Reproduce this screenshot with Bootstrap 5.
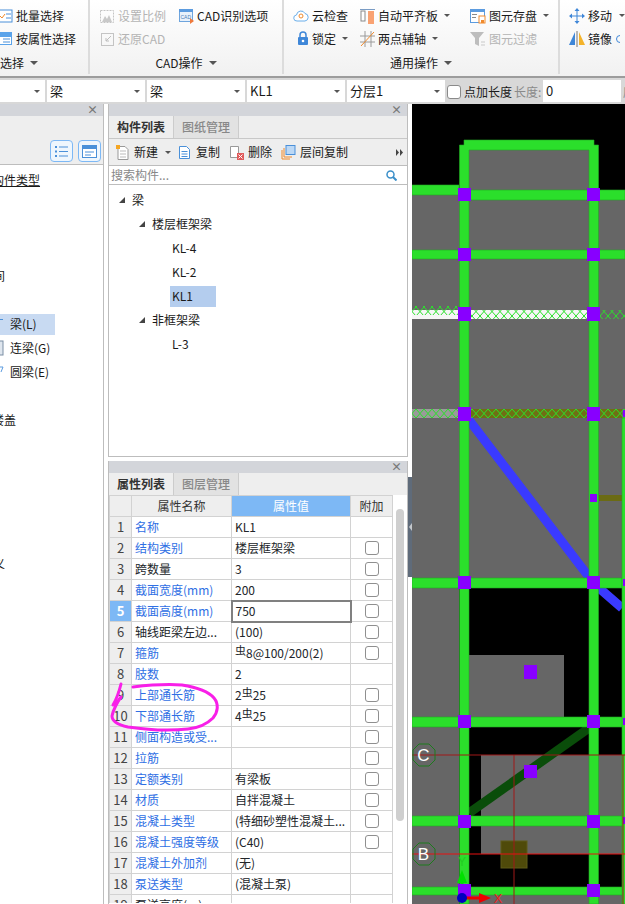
<!DOCTYPE html>
<html lang="zh-CN">
<head>
    <meta charset="UTF-8">
    <meta name="viewport" content="width=device-width, initial-scale=1.0">
    <title>构件列表</title>
    <link href="https://cdn.jsdelivr.net/npm/bootstrap@5.3.0/dist/css/bootstrap.min.css" rel="stylesheet">
    <style>
        html, body { height: 904px; overflow: hidden; }
        body {
            background: #fff;
            color: #1a1a1a;
            font-family: "Noto Sans CJK SC", "Liberation Sans", sans-serif;
            font-size: 12px;
            line-height: 16px;
        }
        .rb-bar { height: 76px; background: linear-gradient(to bottom, #fff, #f1f1f1); flex: none; overflow: hidden; }
        .rb-group { flex: none; height: 74px; border-right: 2px solid #dcdcdc; }
        .rb-last { border-right: 0; }
        .rb-body { height: 52px; padding-top: 4px; }
        .rb-row { height: 23px; gap: 3px; white-space: nowrap; }
        .rb-label { height: 22px; gap: 6px; }
        .rb-off { color: #b4b4b4; }
        .caret-dn { width: 0; height: 0; border-left: 4px solid transparent; border-right: 4px solid transparent; border-top: 4px solid #555; flex: none; }
        .caret-sm { border-left-width: 3px; border-right-width: 3px; border-top-width: 3px; margin-left: 3px; }
        .w-g1 { width: 90px; }
        .w-g2 { width: 194px; }
        .w-g3 { width: 276px; }
        .w-g4 { width: 65px; }
        .pl-col { padding-left: 9px; }
        .w-80 { width: 80px; }
        .w-67 { width: 67px; }
        .w-110 { width: 110px; }
        .w-53 { width: 53px; }
        .opt-bar { height: 28px; flex: none; background: #d8d8d8; border-top: 2px solid #9c9c9c; padding-top: 2px; gap: 2px; overflow: hidden; white-space: nowrap; }
        .opt-sel { height: 22px; width: 98px; flex: none; background: #fff; padding: 0 5px 0 3px; font-size: 13px; }
        .opt-first { width: 45px; }
        .opt-check { width: 14px; height: 14px; margin: 0 3px 0 0; border: 1px solid #8a8a8a; border-radius: 3px; flex: none; }
        .opt-name { margin-right: 2px; }
        .opt-len { margin-right: 0; width: 27px; overflow: hidden; }
        .opt-input { width: 78px; height: 22px; background: #fff; padding-left: 3px; flex: none; font-size: 13px; }
        .opt-mute { color: #8a8a8a; }
        .work-area { height: 800px; }
        .side-pane { width: 104px; flex: none; border-right: 1px solid #bdbdbd; overflow: hidden; }
        .mid-col { width: 300px; flex: none; margin-left: 4px; }
        .pane-head { height: 12px; flex: none; background: #d3d5da; color: #777; font-size: 11px; line-height: 11px; font-weight: 700; text-align: right; padding-right: 5px; }
        .tab-strip { height: 22px; flex: none; background: #eee; }
        .tab-on, .tab-off { width: 65px; text-align: center; line-height: 21px; font-size: 12px; }
        .tab-on { font-weight: 700; color: #333; border-right: 1px solid #ccc; }
        .tab-off { color: #888; background: #e2e2e2; border-right: 1px solid #ccc; font-weight: 500; }
        .pane-box { border-left: 1px solid #bdbdbd; border-right: 1px solid #bdbdbd; }
        .tool-strip { height: 28px; flex: none; background: #eee; border-top: 1px solid #c8c8c8; border-bottom: 1px solid #bdbdbd; gap: 9px; padding-left: 6px; white-space: nowrap; }
        .tool-item { gap: 4px; }
        .tool-copy { gap: 5px; margin-left: -2px; }
        .search-row { height: 19px; flex: none; border-bottom: 1px solid #bdbdbd; color: #888; padding: 0 10px 0 2px; }
        .tree-area { height: 272px; border-bottom: 1px solid #bdbdbd; padding-top: 3px; }
        .tree-row { height: 24px; white-space: nowrap; }
        .tree-l0 { padding-left: 10px; }
        .tree-l1 { padding-left: 30px; }
        .tree-l2 { padding-left: 63px; }
        .tree-tri { width: 0; height: 0; border-left: 6px solid transparent; border-bottom: 6px solid #444; margin-right: 7px; flex: none; }
        .tree-sel { background: #b4cdee; width: 46px; height: 21px; padding-left: 2px; margin-left: -2px; }
        .side-tools { height: 27px; background: #eee; border-bottom: 1px solid #bdbdbd; gap: 5px; padding-right: 2px; }
        .side-btn { width: 23px; height: 22px; border: 1px solid #7db8f5; border-radius: 4px; background: #eef6fd; }
        .side-list { padding-top: 3px; }
        .side-row { height: 24px; white-space: nowrap; }
        .side-ico { margin-right: 6px; flex: none; }
        .side-sel { background: #c8daf2; width: 55px; height: 21px; }
        .side-under { text-decoration: underline; text-decoration-thickness: 1px; margin-left: -8px; }
        .side-clip { margin-left: -8px; }
        .side-clip-far { margin-left: -19px; }
        .prop-gap { height: 4px; flex: none; background: #fff; }
        .prop-body { height: 408px; overflow: hidden; }
        .prop-wrap { width: 283px; flex: none; }
        .prop-table { margin: 0; width: 283px; table-layout: fixed; border-collapse: collapse; font-size: 12px; }
        .prop-table th, .prop-table td { height: 21px; padding: 0 3px; border: 1px solid #d2d2d2; font-weight: 400; white-space: nowrap; overflow: hidden; vertical-align: middle; }
        .prop-table th { background: #eee; text-align: center; font-size: 12px; color: #333; }
        .prop-table th.prop-hot { background: #7db8f5; color: #fff; }
        .prop-table td.prop-num { background: #eee; color: #444; text-align: center; padding: 0; font-size: 13px; }
        .prop-table td.prop-num-on { background: #7db8f5; color: #fff; font-weight: 700; }
        .prop-table td.prop-edit { border: 2px solid #808080; }
        .prop-c1 { width: 22px; }
        .prop-c2 { width: 100px; }
        .prop-c3 { width: 119px; }
        .prop-c4 { width: 42px; }
        .prop-blue { color: #2f6fe4; }
        .prop-bar { width: 17px; flex: none; }
        .prop-thumb { width: 8px; height: 312px; margin: 14px 0 0 4px; background: #cfcfcf; border-radius: 4px; }
        .prop-cb { width: 14px; height: 14px; margin: 0 auto; display: block; border: 1px solid #8f8f8f; border-radius: 3px; }
        .rebar-mark { font-size: 11px; position: relative; top: -3px; }
        .pen-mark { position: absolute; left: 0; top: 0; pointer-events: none; }
        .split-col { width: 4px; flex: none; }
        .split-bar { height: 100px; margin-top: 373px; background: #5f6b7a; }
        .split-tri { width: 0; height: 0; border-top: 4px solid transparent; border-bottom: 4px solid transparent; border-right: 3px solid #c4c8cc; }
        .cad-view { width: 213px; height: 800px; display: block; flex: none; }
        .cad-txt { font-family: "Liberation Sans", sans-serif; }
    </style>
</head>
<body>
<div class="d-flex flex-column position-relative">
    <!-- 功能区 -->
    <div class="rb-bar d-flex">
        <div class="rb-group w-g1">
            <div class="rb-body">
                <div class="rb-row d-flex align-items-center">
                    <svg width="13" height="14" viewBox="0 0 13 14"><rect x="-3" y="1" width="15" height="12" fill="#fff" stroke="#4a90d9"/><path d="M0 7l2 2 3-4" stroke="#f08a2c" fill="none"/><path d="M6 5h5M6 9h5" stroke="#4a90d9"/></svg>
                    <span>批量选择</span>
                </div>
                <div class="rb-row d-flex align-items-center">
                    <svg width="13" height="14" viewBox="0 0 13 14"><rect x="-3" y="0" width="15" height="13" fill="#5aa3ea"/><rect x="-2" y="5" width="13" height="7" fill="#fff"/><path d="M3 7h7M3 10h7" stroke="#4a90d9"/></svg>
                    <span>按属性选择</span>
                </div>
            </div>
            <div class="rb-label d-flex align-items-center"><span>选择</span><i class="caret-dn"></i></div>
        </div>
        <div class="rb-group w-g2">
            <div class="rb-body d-flex pl-col">
                <div class="w-80 rb-off">
                    <div class="rb-row d-flex align-items-center">
                        <svg width="16" height="16" viewBox="0 0 16 16"><rect x="1.500" y="2.500" width="13" height="12" fill="none" stroke="#c4c4c4" stroke-dasharray="2 1"/><path d="M3 14l3-6 2 3 2-4 3 7z" fill="#c9c9c9"/></svg>
                        <span>设置比例</span>
                    </div>
                    <div class="rb-row d-flex align-items-center">
                        <svg width="16" height="16" viewBox="0 0 16 16"><rect x="2.500" y="2.500" width="12" height="12" fill="none" stroke="#c4c4c4"/><path d="M12 5l-5 5M7 7v3h3" stroke="#bdbdbd" fill="none"/></svg>
                        <span>还原CAD</span>
                    </div>
                </div>
                <div>
                    <div class="rb-row d-flex align-items-center">
                        <svg width="15" height="16" viewBox="0 0 15 16"><rect x="0.500" y="1.500" width="13" height="12" fill="#e8f1fb" stroke="#6fa5dd"/><rect x="0" y="1" width="14" height="3" fill="#5b9bdf"/><text x="1.500" y="11" font-size="5" fill="#4a7fb8" class="cad-txt">CAD</text><path d="M11 10l4 3-4 3z" fill="#f07a3c"/></svg>
                        <span>CAD识别选项</span>
                    </div>
                </div>
            </div>
            <div class="rb-label d-flex align-items-center justify-content-center"><span>CAD操作</span><i class="caret-dn"></i></div>
        </div>
        <div class="rb-group w-g3">
            <div class="rb-body d-flex pl-col">
                <div class="w-67">
                    <div class="rb-row d-flex align-items-center">
                        <svg width="16" height="14" viewBox="0 0 16 14"><path d="M4 12a3 3 0 0 1-.500-6 4.500 4.500 0 0 1 8.500-1.500 3.800 3.800 0 0 1 0 7.500z" fill="#fff" stroke="#6aaeea"/><circle cx="8" cy="7" r="2" fill="none" stroke="#f08a2c"/></svg>
                        <span>云检查</span>
                    </div>
                    <div class="rb-row d-flex align-items-center">
                        <svg class="ms-1" width="12" height="15" viewBox="0 0 12 15"><path d="M3 7V4a3 3 0 0 1 6 0v3" fill="none" stroke="#3f87d8" stroke-width="1.500"/><rect x="1" y="6" width="10" height="8" rx="1" fill="#3f87d8"/><circle cx="6" cy="10" r="1.300" fill="#fff"/></svg>
                        <span>锁定</span><i class="caret-dn caret-sm"></i>
                    </div>
                </div>
                <div class="w-110">
                    <div class="rb-row d-flex align-items-center">
                        <svg width="15" height="16" viewBox="0 0 15 16"><path d="M0 1.500h15" stroke="#7a9cc4"/><rect x="1" y="3" width="4" height="10" fill="#fff" stroke="#8a8a8a"/><rect x="8" y="3" width="6" height="13" fill="#f9a272"/></svg>
                        <span>自动平齐板</span><i class="caret-dn caret-sm"></i>
                    </div>
                    <div class="rb-row d-flex align-items-center">
                        <svg width="15" height="16" viewBox="0 0 15 16"><path d="M0 5h15M0 11h15M5 0v16M11 0v16" stroke="#9a9a9a"/><path d="M1 15L14 1" stroke="#f08a2c"/></svg>
                        <span>两点辅轴</span><i class="caret-dn caret-sm"></i>
                    </div>
                </div>
                <div>
                    <div class="rb-row d-flex align-items-center">
                        <svg width="16" height="16" viewBox="0 0 16 16"><rect x="0.500" y="1.500" width="14" height="13" fill="#fff" stroke="#5b9bdf"/><rect x="0" y="1" width="15" height="3" fill="#5b9bdf"/><rect x="2" y="6" width="5" height="1" fill="#8a8a8a"/><rect x="2" y="9" width="4" height="1" fill="#8a8a8a"/><rect x="9" y="8" width="6" height="7" fill="#fff" stroke="#f08a2c"/><rect x="11" y="12" width="3" height="3" fill="#f08a2c"/></svg>
                        <span>图元存盘</span><i class="caret-dn caret-sm"></i>
                    </div>
                    <div class="rb-row d-flex align-items-center rb-off">
                        <svg width="16" height="16" viewBox="0 0 16 16"><path d="M0 1h14L9 7v8L5 13V7z" fill="#bdbdbd"/><path d="M11 11h4M11 14h4" stroke="#c9c9c9"/></svg>
                        <span>图元过滤</span>
                    </div>
                </div>
            </div>
            <div class="rb-label d-flex align-items-center justify-content-center"><span>通用操作</span><i class="caret-dn"></i></div>
        </div>
        <div class="rb-group rb-last w-g4">
            <div class="rb-body d-flex pl-col">
                <div class="w-53">
                    <div class="rb-row d-flex align-items-center">
                        <svg width="16" height="16" viewBox="0 0 16 16"><path d="M8 0l2.500 3h-5zM8 16l2.500-3h-5zM0 8l3-2.500v5zM16 8l-3-2.500v5z" fill="#3f87d8"/><path d="M8 3v10M3 8h10" stroke="#3f87d8"/></svg>
                        <span>移动</span>
                    </div>
                    <div class="rb-row d-flex align-items-center">
                        <svg width="16" height="16" viewBox="0 0 16 16"><path d="M6 1v13H0z" fill="#3f87d8"/><path d="M10 1v13h6z" fill="#f4b32a"/><path d="M8 0v16" stroke="#777"/></svg>
                        <span>镜像</span>
                    </div>
                </div>
                <div>
                    <div class="rb-row d-flex align-items-center"><i class="caret-dn caret-sm"></i></div>
                    <div class="rb-row d-flex align-items-center"><svg width="4" height="10" viewBox="0 0 4 10"><circle cx="4" cy="5" r="3.500" fill="none" stroke="#3f87d8"/></svg></div>
                </div>
            </div>
        </div>
    </div>

    <!-- 选项栏 -->
    <div class="opt-bar d-flex">
        <div class="opt-sel opt-first d-flex align-items-center justify-content-end"><i class="caret-dn caret-sm"></i></div>
        <div class="opt-sel d-flex align-items-center justify-content-between"><span>梁</span><i class="caret-dn caret-sm"></i></div>
        <div class="opt-sel d-flex align-items-center justify-content-between"><span>梁</span><i class="caret-dn caret-sm"></i></div>
        <div class="opt-sel d-flex align-items-center justify-content-between"><span>KL1</span><i class="caret-dn caret-sm"></i></div>
        <div class="opt-sel d-flex align-items-center justify-content-between"><span>分层1</span><i class="caret-dn caret-sm"></i></div>
        <div class="d-flex align-items-center"><input type="checkbox" class="opt-check form-check-input"><span class="opt-name">点加长度</span><span class="opt-mute opt-len">长度:</span></div>
        <div class="opt-input d-flex align-items-center">0</div>
        <div class="opt-mute d-flex align-items-center">底</div>
    </div>

    <div class="work-area d-flex">
        <!-- 左侧导航 -->
        <div class="side-pane d-flex flex-column">
            <div class="pane-head">×</div>
            <div class="tab-strip"></div>
            <div class="side-tools d-flex align-items-center justify-content-end">
                <div class="side-btn d-flex align-items-center justify-content-center">
                    <svg width="13" height="13" viewBox="0 0 13 13"><path d="M0 1h2v2H0zM0 5.500h2v2H0zM0 10h2v2H0z" fill="#4a90d9"/><path d="M4 2h9M4 6.500h9M4 11h9" stroke="#4a90d9"/></svg>
                </div>
                <div class="side-btn d-flex align-items-center justify-content-center">
                    <svg width="15" height="13" viewBox="0 0 15 13"><rect x="0.500" y="0.500" width="14" height="12" fill="#fff" stroke="#4a90d9"/><rect x="0" y="0" width="15" height="4" fill="#4a90d9"/><path d="M3 7h9M3 10h6" stroke="#4a90d9"/></svg>
                </div>
            </div>
            <div class="side-list">
                <div class="side-row d-flex align-items-center"><span class="side-under">构件类型</span></div>
                <div class="side-row"></div>
                <div class="side-row"></div>
                <div class="side-row"></div>
                <div class="side-row d-flex align-items-center"><span class="side-clip-far">空间</span></div>
                <div class="side-row"></div>
                <div class="side-row d-flex align-items-center"><div class="side-sel d-flex align-items-center"><svg class="side-ico" width="4" height="12" viewBox="0 0 4 12"><path d="M0 1h3v1H0z" fill="#4a90d9"/></svg>梁(L)</div></div>
                <div class="side-row d-flex align-items-center"><svg class="side-ico" width="4" height="16" viewBox="0 0 4 16"><rect x="-2" y="1" width="5" height="14" fill="#dfe6ee" stroke="#7a8ea4"/></svg>连梁(G)</div>
                <div class="side-row d-flex align-items-center"><svg class="side-ico" width="4" height="12" viewBox="0 0 4 12"><path d="M0 1h3L1 6" fill="none" stroke="#5b9bdf"/></svg>圆梁(E)</div>
                <div class="side-row"></div>
                <div class="side-row d-flex align-items-center"><span class="side-clip">楼盖</span></div>
                <div class="side-row"></div>
                <div class="side-row"></div>
                <div class="side-row"></div>
                <div class="side-row"></div>
                <div class="side-row"></div>
                <div class="side-row d-flex align-items-center"><span class="side-clip-far">定义</span></div>
            </div>
        </div>

        <div class="mid-col d-flex flex-column">
            <!-- 构件列表 -->
            <div class="pane-box d-flex flex-column">
                <div class="pane-head">×</div>
                <div class="tab-strip d-flex"><div class="tab-on">构件列表</div><div class="tab-off">图纸管理</div></div>
                <div class="tool-strip d-flex align-items-center">
                    <div class="tool-item d-flex align-items-center">
                        <svg width="15" height="15" viewBox="0 0 15 15"><path d="M3 1.500h7l3 3v10H3z" fill="#fff" stroke="#999"/><path d="M5 6h6M5 9h6M5 12h6" stroke="#bbb"/><rect x="1" y="0" width="4" height="4" fill="#f5a623"/></svg>
                        <span>新建</span><i class="caret-dn caret-sm"></i>
                    </div>
                    <div class="tool-item tool-copy d-flex align-items-center">
                        <svg width="13" height="15" viewBox="0 0 13 15"><path d="M1.500 1.500h7l3 3v9h-10z" fill="#fff" stroke="#4a90d9"/><path d="M3.500 6.500h6M3.500 9h6M3.500 11.500h6" stroke="#4a90d9"/></svg>
                        <span>复制</span>
                    </div>
                    <div class="tool-item d-flex align-items-center">
                        <svg width="15" height="15" viewBox="0 0 15 15"><path d="M1.500 1.500h8v11h-8z" fill="#fff" stroke="#999"/><rect x="8" y="8" width="7" height="7" fill="#e05a5a"/><path d="M9.500 9.500l4 4M13.500 9.500l-4 4" stroke="#fff"/></svg>
                        <span>删除</span>
                    </div>
                    <div class="tool-item d-flex align-items-center">
                        <svg width="15" height="15" viewBox="0 0 15 15"><path d="M1 5v9h8M3 3v9h8" fill="none" stroke="#f08a2c"/><rect x="5" y="0.500" width="9" height="9" fill="#bcd8f5" stroke="#4a90d9"/></svg>
                        <span>层间复制</span>
                    </div>
                    <svg class="ms-auto me-1" width="7" height="7" viewBox="0 0 7 7"><path d="M0 0l3 3.500L0 7zM4 0l3 3.500L4 7z" fill="#444"/></svg>
                </div>
                <div class="search-row d-flex align-items-center justify-content-between">
                    <span>搜索构件...</span>
                    <svg width="11" height="11" viewBox="0 0 11 11"><circle cx="4.500" cy="4.500" r="3.500" fill="none" stroke="#3b8fc9" stroke-width="1.500"/><path d="M7 7l3.500 3.500" stroke="#3b8fc9" stroke-width="2"/></svg>
                </div>
                <div class="tree-area">
                    <div class="tree-row tree-l0 d-flex align-items-center"><i class="tree-tri"></i>梁</div>
                    <div class="tree-row tree-l1 d-flex align-items-center"><i class="tree-tri"></i>楼层框架梁</div>
                    <div class="tree-row tree-l2 d-flex align-items-center">KL-4</div>
                    <div class="tree-row tree-l2 d-flex align-items-center">KL-2</div>
                    <div class="tree-row tree-l2 d-flex align-items-center"><div class="tree-sel d-flex align-items-center">KL1</div></div>
                    <div class="tree-row tree-l1 d-flex align-items-center"><i class="tree-tri"></i>非框架梁</div>
                    <div class="tree-row tree-l2 d-flex align-items-center">L-3</div>
                </div>
            </div>
            <div class="prop-gap"></div>
            <!-- 属性列表 -->
            <div class="pane-box d-flex flex-column flex-grow-1">
                <div class="pane-head">×</div>
                <div class="tab-strip d-flex"><div class="tab-on">属性列表</div><div class="tab-off">图层管理</div></div>
                <div class="prop-body d-flex">
                    <div class="prop-wrap">
                        <table class="table prop-table">
                            <colgroup><col class="prop-c1"><col class="prop-c2"><col class="prop-c3"><col class="prop-c4"></colgroup>
                            <thead><tr><th></th><th>属性名称</th><th class="prop-hot">属性值</th><th>附加</th></tr></thead>
                            <tbody>
                                <tr><td class="prop-num">1</td><td class="prop-blue">名称</td><td>KL1</td><td></td></tr>
                                <tr><td class="prop-num">2</td><td class="prop-blue">结构类别</td><td>楼层框架梁</td><td><input type="checkbox" class="form-check-input prop-cb"></td></tr>
                                <tr><td class="prop-num">3</td><td>跨数量</td><td>3</td><td><input type="checkbox" class="form-check-input prop-cb"></td></tr>
                                <tr><td class="prop-num">4</td><td class="prop-blue">截面宽度(mm)</td><td>200</td><td><input type="checkbox" class="form-check-input prop-cb"></td></tr>
                                <tr><td class="prop-num prop-num-on">5</td><td class="prop-blue">截面高度(mm)</td><td class="prop-edit">750</td><td><input type="checkbox" class="form-check-input prop-cb"></td></tr>
                                <tr><td class="prop-num">6</td><td>轴线距梁左边...</td><td>(100)</td><td><input type="checkbox" class="form-check-input prop-cb"></td></tr>
                                <tr><td class="prop-num">7</td><td class="prop-blue">箍筋</td><td><span class="rebar-mark">虫</span>8@100/200(2)</td><td><input type="checkbox" class="form-check-input prop-cb"></td></tr>
                                <tr><td class="prop-num">8</td><td class="prop-blue">肢数</td><td>2</td><td></td></tr>
                                <tr><td class="prop-num">9</td><td class="prop-blue">上部通长筋</td><td>2<span class="rebar-mark">虫</span>25</td><td><input type="checkbox" class="form-check-input prop-cb"></td></tr>
                                <tr><td class="prop-num">10</td><td class="prop-blue">下部通长筋</td><td>4<span class="rebar-mark">虫</span>25</td><td><input type="checkbox" class="form-check-input prop-cb"></td></tr>
                                <tr><td class="prop-num">11</td><td class="prop-blue">侧面构造或受...</td><td></td><td><input type="checkbox" class="form-check-input prop-cb"></td></tr>
                                <tr><td class="prop-num">12</td><td class="prop-blue">拉筋</td><td></td><td><input type="checkbox" class="form-check-input prop-cb"></td></tr>
                                <tr><td class="prop-num">13</td><td class="prop-blue">定额类别</td><td>有梁板</td><td><input type="checkbox" class="form-check-input prop-cb"></td></tr>
                                <tr><td class="prop-num">14</td><td class="prop-blue">材质</td><td>自拌混凝土</td><td><input type="checkbox" class="form-check-input prop-cb"></td></tr>
                                <tr><td class="prop-num">15</td><td class="prop-blue">混凝土类型</td><td>(特细砂塑性混凝土...</td><td><input type="checkbox" class="form-check-input prop-cb"></td></tr>
                                <tr><td class="prop-num">16</td><td class="prop-blue">混凝土强度等级</td><td>(C40)</td><td><input type="checkbox" class="form-check-input prop-cb"></td></tr>
                                <tr><td class="prop-num">17</td><td class="prop-blue">混凝土外加剂</td><td>(无)</td><td></td></tr>
                                <tr><td class="prop-num">18</td><td class="prop-blue">泵送类型</td><td>(混凝土泵)</td><td></td></tr>
                                <tr><td class="prop-num">19</td><td>泵送高度(m)</td><td></td><td></td></tr>
                            </tbody>
                        </table>
                    </div>
                    <div class="prop-bar"><div class="prop-thumb"></div></div>
                </div>
            </div>
        </div>

        <div class="split-col"><div class="split-bar d-flex align-items-center justify-content-center"><i class="split-tri"></i></div></div>

        <!-- 绘图区 -->
        <svg class="cad-view" viewBox="412 104 213 800">
            <defs>
                <pattern id="hatchX" x="0" y="0" width="8" height="9" patternUnits="userSpaceOnUse">
                    <path d="M0 0L8 9M8 0L0 9" stroke="#2bdf2b" stroke-width="1"/>
                </pattern>
                <pattern id="hatchA" x="0" y="1" width="8" height="9" patternUnits="userSpaceOnUse">
                    <path d="M0 0L8 9M8 0L0 9" stroke="#2bdf2b" stroke-width="1"/>
                </pattern>
                <pattern id="hatchB" x="0" y="4" width="8" height="9" patternUnits="userSpaceOnUse">
                    <path d="M0 0L8 9M8 0L0 9" stroke="#2bdf2b" stroke-width="1"/>
                </pattern>
            </defs>
            <rect x="412" y="104" width="213" height="800" fill="#000"/>
            <g fill="#666">
                <rect x="469" y="150" width="120" height="45"/>
                <rect x="412" y="195" width="213" height="393"/>
                <rect x="412" y="588" width="47" height="316"/>
                <rect x="469" y="655" width="95" height="62"/>
                <rect x="481" y="755" width="144" height="99"/>
                <rect x="469" y="895" width="156" height="9"/>
            </g>
            <!-- 梁带 -->
            <rect x="412" y="310" width="177" height="9" fill="#f6f6f6"/>
            <rect x="412" y="306" width="47" height="9" fill="url(#hatchA)"/>
            <rect x="469" y="310" width="120" height="9" fill="url(#hatchA)"/>
            <rect x="599" y="310" width="26" height="9" fill="url(#hatchA)"/>
            <rect x="412" y="409" width="47" height="9" fill="#9a9a9a"/>
            <rect x="469" y="409" width="153" height="9" fill="#6f6f14"/>
            <rect x="412" y="409" width="213" height="9" fill="url(#hatchB)"/>
            <rect x="599" y="495" width="23" height="6" fill="#6b6b14"/>
            <!-- 斜梁 -->
            <path d="M469 420L589 577M599 588L622 608" stroke="#3a3aff" stroke-width="9"/>
            <path d="M469 813L589 728" stroke="#0a4d0a" stroke-width="9"/>
            <rect x="501" y="841" width="26" height="27" fill="#4f4a0a" stroke="#5f5a18"/>
            <!-- 绿色梁柱 -->
            <g fill="#2bdf2b" stroke="#23a823" stroke-width="0.600">
                <path d="M459.500 904V145H464V140H594V145H598.500V904H589V150H469V904z"/>
                <rect x="412" y="185" width="47" height="10"/>
                <rect x="469" y="190" width="120" height="10"/>
                <rect x="599" y="190" width="26" height="10"/>
                <rect x="412" y="250" width="47" height="9"/>
                <rect x="469" y="250" width="120" height="9"/>
                <rect x="599" y="250" width="26" height="9"/>
                <rect x="412" y="578" width="47" height="10"/>
                <rect x="469" y="578" width="153" height="10"/>
                <rect x="412" y="717" width="213" height="10"/>
                <rect x="412" y="816" width="213" height="10"/>
                <rect x="412" y="887" width="213" height="8"/>
                <rect x="622" y="418" width="4" height="486"/>
            </g>
            <!-- 紫色柱 -->
            <g fill="#8800ff">
                <rect x="458" y="188" width="13" height="13"/><rect x="587" y="188" width="13" height="13"/>
                <rect x="458" y="248" width="13" height="13"/><rect x="587" y="248" width="13" height="13"/>
                <rect x="458" y="307" width="13" height="14"/><rect x="587" y="307" width="13" height="14"/>
                <rect x="458" y="407" width="13" height="14"/><rect x="587" y="407" width="13" height="14"/>
                <rect x="590" y="494" width="7" height="8"/>
                <rect x="458" y="576" width="13" height="13"/><rect x="587" y="576" width="13" height="13"/>
                <rect x="524" y="665" width="13" height="14"/>
                <rect x="458" y="715" width="13" height="13"/><rect x="587" y="715" width="13" height="13"/>
                <rect x="524" y="765" width="13" height="13"/>
                <rect x="458" y="815" width="13" height="13"/><rect x="587" y="815" width="13" height="13"/>
                <rect x="458" y="884" width="13" height="13"/><rect x="587" y="884" width="13" height="13"/>
                <rect x="623" y="410" width="2" height="7"/><rect x="623" y="579" width="2" height="7"/><rect x="623" y="718" width="2" height="7"/><rect x="623" y="817" width="2" height="7"/>
            </g>
            <!-- 轴网 -->
            <path d="M412 755H625M514 755V904M623 755V904" stroke="#a01818" fill="none"/>
            <path d="M412 854H625" stroke="#e81010" fill="none"/>
            <g fill="none" stroke="#1d7a1d">
                <polygon points="419,744 429,744 435,750 435,760 429,766 419,766 413,760 413,750"/>
                <polygon points="419,843 429,843 435,849 435,859 429,865 419,865 413,859 413,849"/>
            </g>
            <text x="423.500" y="761" font-size="17" fill="#fff" text-anchor="middle" class="cad-txt">C</text>
            <text x="423.500" y="860" font-size="17" fill="#fff" text-anchor="middle" class="cad-txt">B</text>
            <!-- 坐标轴 -->
            <path d="M462 894V883" stroke="#8800ff" stroke-width="3"/>
            <path d="M462 884V876" stroke="#00e000" stroke-width="3"/>
            <path d="M462 870l5 13h-10z" fill="#00e000"/>
            <text x="462" y="866" font-size="12" fill="#22cc22" text-anchor="middle" class="cad-txt">Y</text>
            <path d="M466 898h14" stroke="#ee0000" stroke-width="3"/>
            <path d="M491 898l-12-5v10z" fill="#ee0000"/>
            <circle cx="462" cy="898" r="5" fill="#0000c0"/>
            <text x="498" y="903" font-size="13" fill="#ee2222" text-anchor="middle" class="cad-txt">X</text>
        </svg>
    </div>

    <!-- 手工圈注 -->
    <svg class="pen-mark" width="625" height="904" viewBox="0 0 625 904">
        <path d="M121 684C119 692 116 700 113 705M133 687C150 685 168 684 182 685C195 687 208 691 214 698C219 704 218 712 213 718C206 725 198 728 188 729C170 731 148 730 128 727C119 725 112 721 112 716C113 710 118 701 121 697" fill="none" stroke="#f81fe8" stroke-width="3" stroke-linecap="round"/>
    </svg>
</div>
</body>
</html>
